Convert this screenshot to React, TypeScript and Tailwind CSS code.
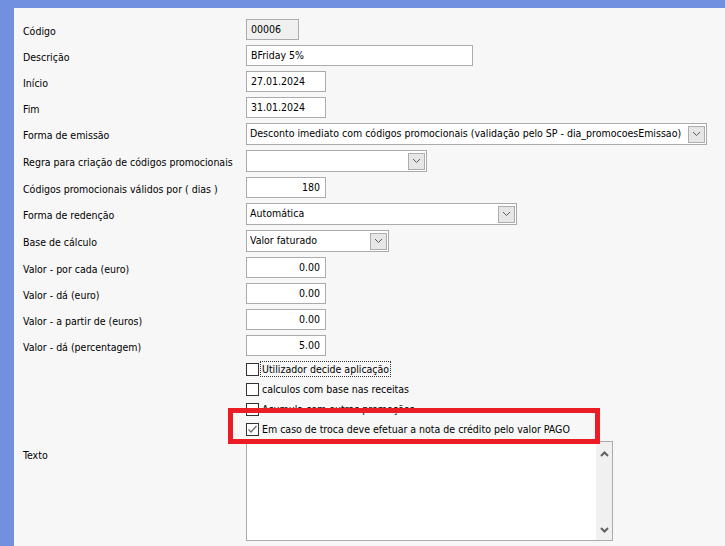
import React from "react";

const font = { fontFamily: '"DejaVu Sans Condensed", "DejaVu Sans", sans-serif', fontStretch: "condensed" as const };

function Chevron() {
  return (
    <svg width="9" height="6" viewBox="0 0 9 6" className="block">
      <path d="M1 1 L4.5 4.5 L8 1" fill="none" stroke="#5a5a5a" strokeWidth="1" />
    </svg>
  );
}

function Row({ label, children }: { label: string; children: React.ReactNode }) {
  return (
    <div className="flex items-center">
      <div className="w-[223px] shrink-0 text-[10.5px] leading-none text-black pt-[3px]">{label}</div>
      {children}
    </div>
  );
}

function Input({ w, value, right, gray }: { w: string; value: string; right?: boolean; gray?: boolean }) {
  return (
    <div
      className={`${w} h-[21px] border border-[#ababab] flex items-center text-[10.5px] ${
        gray ? "bg-[#f0f0f0]" : "bg-white"
      } ${right ? "justify-end pr-[5px]" : "pl-[4px]"}`}
    >
      {value}
    </div>
  );
}

function Select({ w, value }: { w: string; value: string }) {
  return (
    <div className={`${w} h-[22px] border border-[#ababab] bg-white flex items-center justify-between pl-[3px] pr-[1px] text-[10.5px]`}>
      <span className="whitespace-nowrap">{value}</span>
      <div className="w-[17px] h-[17px] bg-[#e6e6e6] border border-[#adadad] flex items-center justify-center">
        <Chevron />
      </div>
    </div>
  );
}

function Check({ label, checked, focus }: { label: string; checked?: boolean; focus?: boolean }) {
  return (
    <div className="h-[20px] flex items-center">
      <div className="w-[13px] h-[13px] border border-[#333333] bg-white flex items-center justify-center">
        {checked && (
          <svg width="11" height="11" viewBox="0 0 11 11" className="block">
            <path d="M1.5 5.5 L4 8 L9.5 2" fill="none" stroke="#6b6b6b" strokeWidth="1.3" />
          </svg>
        )}
      </div>
      <span
        className={`ml-[1px] text-[10.5px] leading-[14px] px-[1px] ${
          focus ? "border border-dotted border-[#333]" : "border border-transparent"
        }`}
      >
        {label}
      </span>
    </div>
  );
}

export default function App() {
  return (
    <div className="w-[725px] h-[546px] bg-[#7190e0] pt-[8px] pl-[14px] overflow-hidden" style={font}>
      <div className="relative h-full bg-[#f7f7f7] pl-[9px] pt-[11px] text-black">
        <div className="flex flex-col gap-[5px]">
          <Row label="Código">
            <Input w="w-[53px]" value="00006" gray />
          </Row>
          <Row label="Descrição">
            <Input w="w-[227px]" value="BFriday 5%" />
          </Row>
          <Row label="Início">
            <Input w="w-[80px]" value="27.01.2024" />
          </Row>
          <Row label="Fim">
            <Input w="w-[80px]" value="31.01.2024" />
          </Row>
          <Row label="Forma de emissão">
            <Select w="w-[461px]" value="Desconto imediato com códigos promocionais (validação pelo SP - dia_promocoesEmissao)" />
          </Row>
          <Row label="Regra para criação de códigos promocionais">
            <Select w="w-[181px]" value="" />
          </Row>
          <Row label="Códigos promocionais válidos por ( dias )">
            <Input w="w-[80px]" value="180" right />
          </Row>
          <Row label="Forma de redenção">
            <Select w="w-[271px]" value="Automática" />
          </Row>
          <Row label="Base de cálculo">
            <Select w="w-[143px]" value="Valor faturado" />
          </Row>
          <Row label="Valor - por cada (euro)">
            <Input w="w-[80px]" value="0.00" right />
          </Row>
          <Row label="Valor - dá (euro)">
            <Input w="w-[80px]" value="0.00" right />
          </Row>
          <Row label="Valor - a partir de (euros)">
            <Input w="w-[80px]" value="0.00" right />
          </Row>
          <Row label="Valor - dá (percentagem)">
            <Input w="w-[80px]" value="5.00" right />
          </Row>
        </div>

        <div className="ml-[223px] mt-[3px] flex flex-col">
          <Check label="Utilizador decide aplicação" focus />
          <Check label="calculos com base nas receitas" />
          <Check label="Acumula com outras promoções" />
          <Check label="Em caso de troca deve efetuar a nota de crédito pelo valor PAGO" checked />
        </div>

        <div className="flex mt-[2px]">
          <div className="w-[223px] shrink-0 pt-[9px] text-[10.5px] leading-none">Texto</div>
          <div className="w-[367px] h-[100px] border border-[#ababab] bg-white flex justify-end">
            <div className="w-[16px] h-full bg-[#f0f0f0] flex flex-col items-center justify-between pt-[9px] pb-[7px]">
              <svg width="9" height="6" viewBox="0 0 9 6" className="block">
                <path d="M1 5 L4.5 1.5 L8 5" fill="none" stroke="#606060" strokeWidth="2" />
              </svg>
              <svg width="9" height="6" viewBox="0 0 9 6" className="block">
                <path d="M1 1 L4.5 4.5 L8 1" fill="none" stroke="#606060" strokeWidth="2" />
              </svg>
            </div>
          </div>
        </div>

        <div className="absolute left-[214px] top-[400px] w-[372px] h-[36px] border-[5px] border-[#ec1c24]" />
      </div>
    </div>
  );
}
